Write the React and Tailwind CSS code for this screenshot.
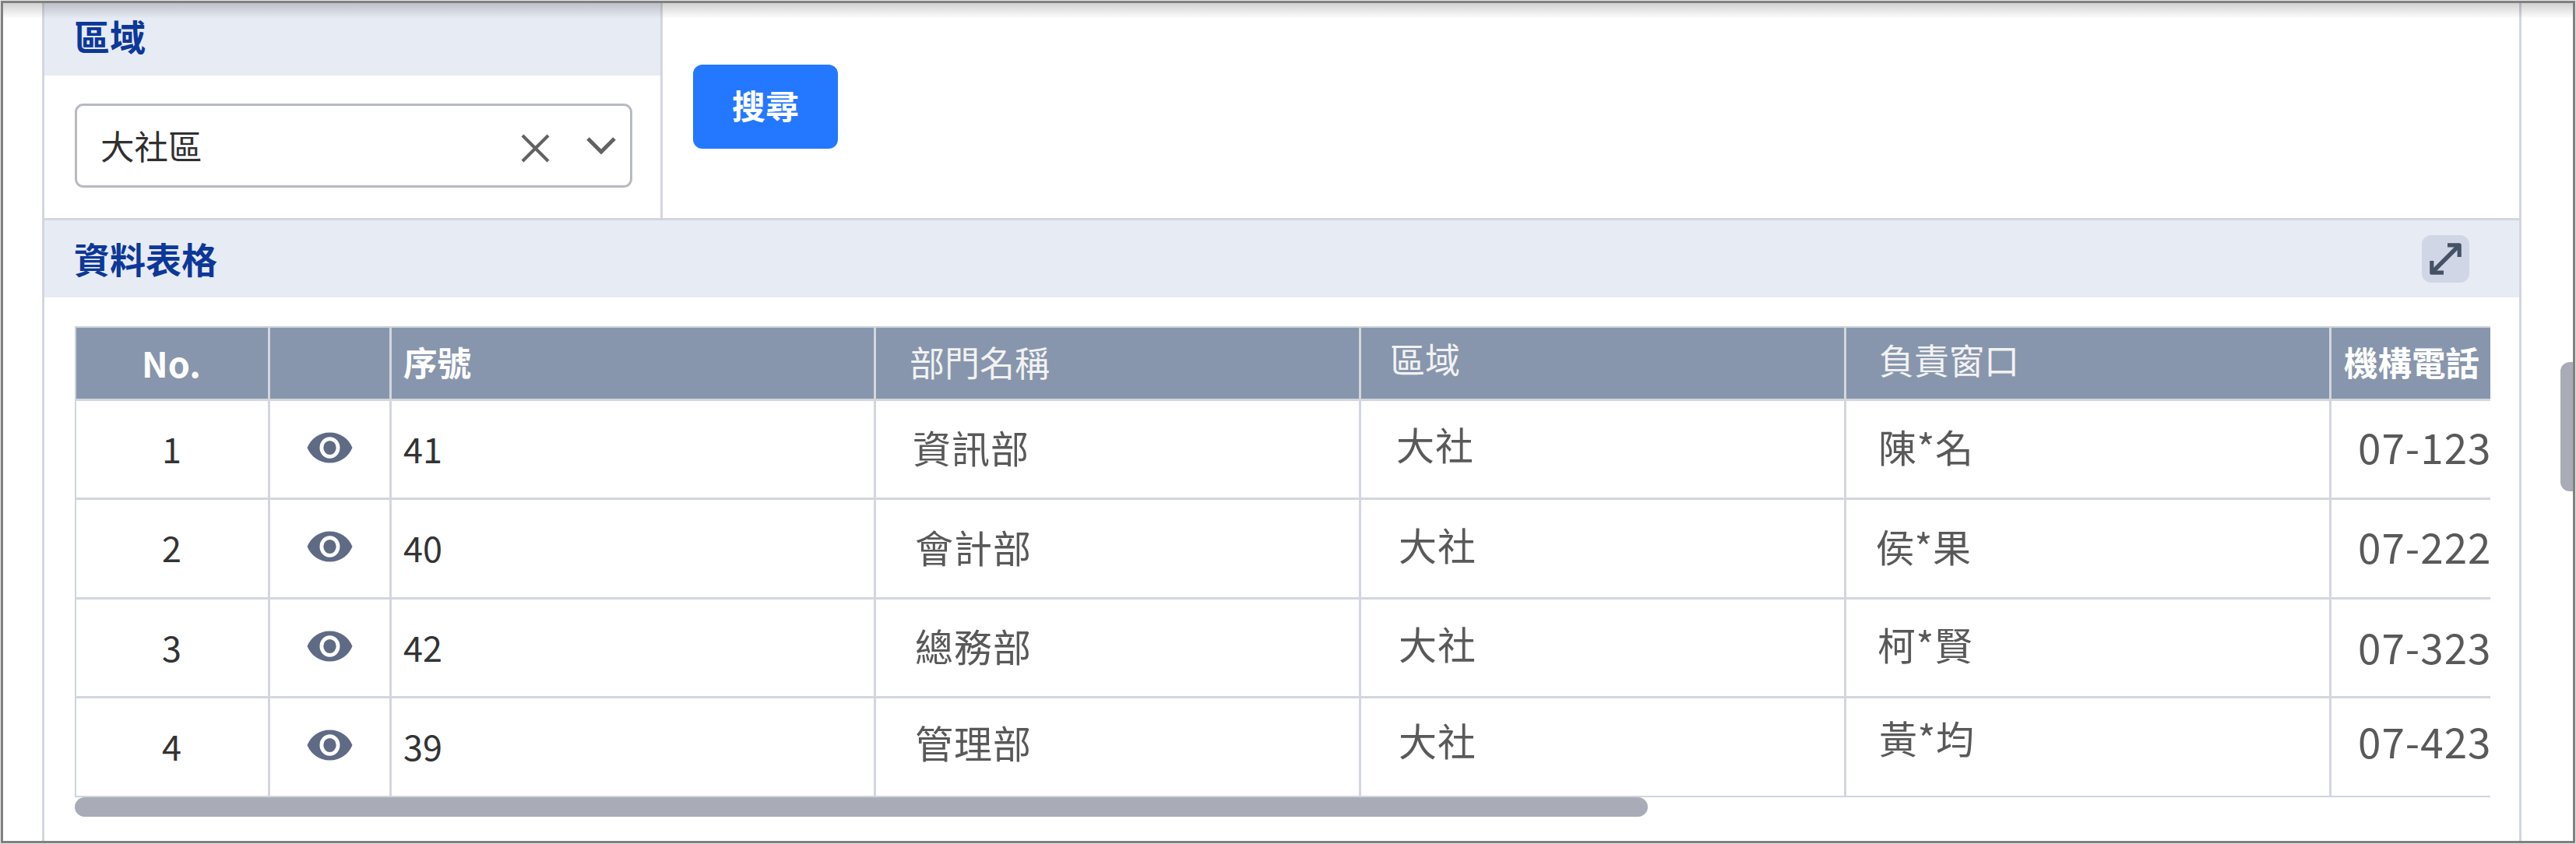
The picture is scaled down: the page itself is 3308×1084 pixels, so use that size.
import { useState } from 'react';

const columns = [
  { key: 'no', label: 'No.', width: 'w-[251px]', head: 'pt-[22px] pr-[2px] text-center text-[45px] font-bold text-white' },
  { key: 'view', label: '', width: 'w-[156px]', head: '' },
  { key: 'serial', label: '序號', width: 'w-[622px]', head: 'pt-[22px] pl-[15px] text-[43.5px] font-bold text-white' },
  { key: 'dept', label: '部門名稱', width: 'w-[623px]', head: 'pt-[21px] pl-[43px] text-[45px] text-[#f2f2f2]' },
  { key: 'area', label: '區域', width: 'w-[623px]', head: 'pt-[17px] pl-[37px] text-[45px] text-[#f2f2f2]' },
  { key: 'contact', label: '負責窗口', width: 'w-[623px]', head: 'pt-[18px] pl-[42px] text-[45px] text-[#f2f2f2]' },
  { key: 'phone', label: '機構電話', width: 'w-[204px]', head: 'pt-[22px] pl-[16px] text-[43.5px] font-bold text-white' },
];

const rows = [
  {
    height: 'h-[127px]',
    no: 1,
    serial: 41,
    dept: ['資訊部', 'pt-[34px] pl-[47px]'],
    area: ['大社', 'pt-[30px] pl-[45px]'],
    contact: ['陳*名', 'pt-[33px] pl-[41px]'],
    phone: ['07-123', 'pt-[32px]'],
  },
  {
    height: 'h-[128px]',
    no: 2,
    serial: 40,
    dept: ['會計部', 'pt-[35px] pl-[50px]'],
    area: ['大社', 'pt-[32px] pl-[48px]'],
    contact: ['侯*果', 'pt-[34px] pl-[38px]'],
    phone: ['07-222', 'pt-[33px]'],
  },
  {
    height: 'h-[127px]',
    no: 3,
    serial: 42,
    dept: ['總務部', 'pt-[34px] pl-[50px]'],
    area: ['大社', 'pt-[31px] pl-[48px]'],
    contact: ['柯*賢', 'pt-[32px] pl-[40px]'],
    phone: ['07-323', 'pt-[34px]'],
  },
  {
    height: 'h-[128px]',
    no: 4,
    serial: 39,
    dept: ['管理部', 'pt-[31px] pl-[50px]'],
    area: ['大社', 'pt-[28px] pl-[48px]'],
    contact: ['黃*均', 'pt-[25px] pl-[42px]'],
    phone: ['07-423', 'pt-[28px]'],
  },
];

const EyeIcon = () => (
  <svg width="59" height="40" viewBox="0 0 59 40">
    <path d="M0.5 20C5.5 8.5 15.5 0.5 29.5 0.5S53.5 8.5 58.5 20C53.5 31.5 43.5 39.5 29.5 39.5S5.5 31.5 0.5 20Z" fill="#5f6b85" />
    <ellipse cx="29.5" cy="20" rx="10.6" ry="11.4" fill="none" stroke="#fff" strokeWidth="4.8" />
  </svg>
);

const ExpandIcon = () => (
  <svg width="41" height="41" viewBox="0 0 41 41" fill="none" stroke="#455266" strokeWidth="5.2">
    <path d="M4 37L37 4" strokeWidth="5.4" />
    <path d="M23 2.8H38.2V18" strokeLinejoin="round" />
    <path d="M2.8 23V38.2H18" strokeLinejoin="round" />
  </svg>
);

const Select = ({ value, onClear }) => (
  <div className="ml-[39px] mt-[36px] flex h-[108px] w-[716px] items-center rounded-[11px] border-[3px] border-[#b7bac2] pl-[30px] pr-[18px]">
    <span className="flex-1 text-[43.5px] leading-none text-[#303030]">{value}</span>
    <button type="button" onClick={onClear} className="mt-[7px]">
      <svg width="37" height="37" viewBox="0 0 37 37" fill="none" stroke="#626262" strokeWidth="4.2">
        <path d="M2 2L35 35M35 2L2 35" />
      </svg>
    </button>
    <svg className="ml-[47px]" width="38" height="24" viewBox="0 0 38 24" fill="none" stroke="#626262" strokeWidth="5">
      <path d="M2 3L19 20L36 3" />
    </svg>
  </div>
);

const Cell = ({ width, className = '', last = false, children }) => (
  <div className={`${width} ${last ? '' : 'border-r-[3px] border-[#d3d6de]'} shrink-0 whitespace-nowrap leading-none ${className}`}>
    {children}
  </div>
);

const DataTable = () => (
  <div className="ml-[39px] mt-[37px] w-[3102px] overflow-hidden">
    <div className="border-b-2 border-l-2 border-[#d0d4dc]">
      <div className="-ml-[2px] flex h-[93px] border-t-2 border-l-2 border-[#cdd1d8] bg-[#8796ac]">
        {columns.map((col, i) => (
          <Cell
            key={col.key}
            width={i === 0 ? 'w-[249px]' : col.width}
            last={i === columns.length - 1}
            className={col.head}
          >
            {col.label}
          </Cell>
        ))}
      </div>
      {rows.map((row) => (
        <div key={row.no} className={`flex border-t-[3px] border-[#d3d6de] text-[#595959] ${row.height}`}>
          <Cell width="w-[249px]" className="pt-[38px] pr-[1px] text-center text-[45px] text-[#333]">{row.no}</Cell>
          <Cell width="w-[156px]" className="flex justify-center pt-[40px] pr-[1px]">
            <EyeIcon />
          </Cell>
          <Cell width="w-[622px]" className="pt-[38px] pl-[15px] text-[45px] text-[#333]">{row.serial}</Cell>
          <Cell width="w-[623px]" className={`text-[49px] tracking-[1px] ${row.dept[1]}`}>{row.dept[0]}</Cell>
          <Cell width="w-[623px]" className={`text-[49px] tracking-[1px] ${row.area[1]}`}>{row.area[0]}</Cell>
          <Cell width="w-[623px]" className={`text-[49px] tracking-[0.5px] ${row.contact[1]}`}>{row.contact[0]}</Cell>
          <Cell width="w-[204px]" last className={`pl-[34px] text-[53px] tracking-[1px] ${row.phone[1]}`}>{row.phone[0]}</Cell>
        </div>
      ))}
    </div>
    <div className="h-[25px] w-[2020px] rounded-full bg-[#a9acb6]" />
  </div>
);

export default function App() {
  const [area, setArea] = useState('大社區');

  return (
    <div className="h-[1084px] w-[3308px] overflow-hidden bg-[#e6e8e6] p-px font-['Noto_Sans_CJK_TC',sans-serif]">
      <div className="relative flex h-[1082px] w-[3306px] justify-between overflow-hidden border-[3px] border-[#808080] bg-white">
        <div className="ml-[50px] w-[3184px] border-x-[3px] border-[#d3d6de]">
          <div className="flex h-[276px]">
            <div className="w-[794px] border-r-[3px] border-[#d3d6de]">
              <div className="h-[93px] bg-[#e7ebf4] pl-[38px] pt-[18px] text-[46px] font-bold leading-none text-[#0c3899]">
                區域
              </div>
              <Select value={area} onClear={() => setArea('')} />
            </div>
            <button
              type="button"
              className="ml-[39px] mt-[79px] h-[108px] w-[186px] rounded-[12px] bg-[#2478ff] pb-[5px] text-[43px] font-bold leading-none text-white"
            >
              搜尋
            </button>
          </div>

          <div className="flex h-[102px] items-center justify-between border-t-[3px] border-[#d3d6de] bg-[#e7ebf4] pl-[38px] pr-[64px]">
            <h2 className="pb-[4px] text-[46px] font-bold leading-none text-[#0c3899]">資料表格</h2>
            <button type="button" className="flex size-[61px] items-center justify-center rounded-[12px] bg-[#d1d6e7]">
              <ExpandIcon />
            </button>
          </div>

          <DataTable />
        </div>

        {/* page scrollbar thumb */}
        <div className="mt-[461px] h-[166px] w-[16px] rounded-l-[12px] bg-[#a9acb6]" />

        <div className="pointer-events-none absolute inset-x-0 top-0 h-[20px] bg-gradient-to-b from-black/18 to-transparent" />
      </div>
    </div>
  );
}
